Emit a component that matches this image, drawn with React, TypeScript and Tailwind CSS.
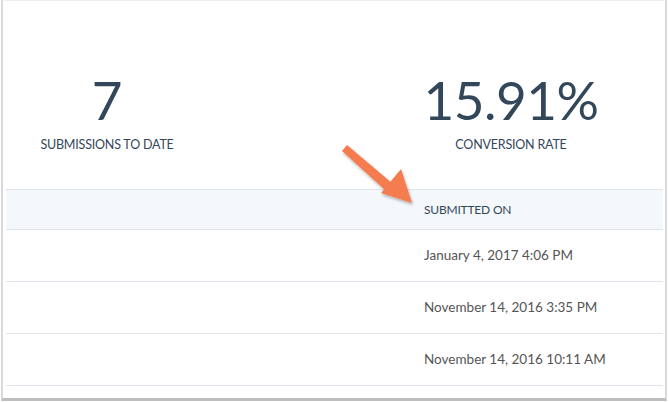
import React from "react";

const font = { fontFamily: "Lato, 'Open Sans', Arial, sans-serif" };

export default function App() {
  const dates = [
    "January 4, 2017 4:06 PM",
    "November 14, 2016 3:35 PM",
    "November 14, 2016 10:11 AM",
  ];
  return (
    <div className="relative w-[669px] h-[402px] bg-white overflow-hidden" style={font}>
      <div className="ml-[1px] w-[666px] h-[401px] border-l-2 border-r-2 border-t border-l-[#d9d9d9] border-r-[#d9d9d9] border-t-[#eeeeee] border-b-[3px] border-b-[#bdbdbd] pl-[3px] pr-[2px]">
        <div className="flex h-[188px] pt-[72px]">
          <div className="w-[202px] flex flex-col items-center">
            <div className="text-[53px] leading-[53px] font-normal text-[#33475b]">7</div>
            <div className="mt-[11px] text-[12.5px] leading-[16px] text-[#33475b] tracking-[-0.2px]">SUBMISSIONS TO DATE</div>
          </div>
          <div className="w-[202px]" />
          <div className="w-[202px] flex flex-col items-center">
            <div className="text-[53px] leading-[53px] font-normal text-[#33475b] tracking-[-0.5px]">15.91%</div>
            <div className="mt-[11px] text-[12.5px] leading-[16px] text-[#33475b] tracking-[-0.2px]">CONVERSION RATE</div>
          </div>
        </div>
        <div className="flex h-[41px] bg-[#f5f8fa] border-t border-b border-[#dfe3eb] items-center">
          <div className="w-[418px]" />
          <div className="text-[12px] text-[#33475b] tracking-[-0.2px]">SUBMITTED ON</div>
        </div>
        {dates.map((d) => (
          <div key={d} className="flex h-[52px] border-b border-[#dfe3eb] items-center">
            <div className="w-[418px]" />
            <div className="text-[13.5px] text-[#555555]">{d}</div>
          </div>
        ))}
      </div>
      <svg className="absolute left-0 top-0" width="669" height="402" viewBox="0 0 669 402">
        <defs>
          <filter id="sh" x="-20%" y="-20%" width="140%" height="140%">
            <feDropShadow dx="1" dy="2" stdDeviation="1.5" floodColor="#000" floodOpacity="0.3" />
          </filter>
        </defs>
        <g filter="url(#sh)" fill="#f47b50">
          <path d="M342 151 L347 145 L392 183 L385 190 Z" />
          <path d="M381 193 L401 169 L412 203 Z" />
        </g>
      </svg>
    </div>
  );
}
